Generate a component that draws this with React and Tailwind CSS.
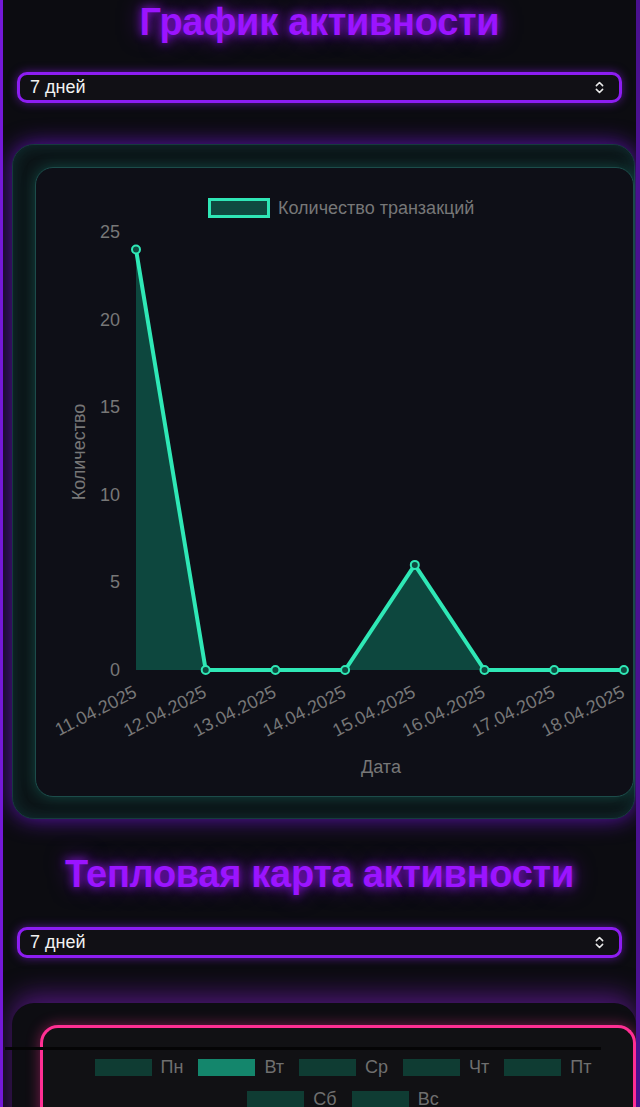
import { ChevronsUpDown } from 'lucide-react';

const FONT = { fontFamily: '"Liberation Sans", Arial, sans-serif' };

const days = ['11.04.2025', '12.04.2025', '13.04.2025', '14.04.2025', '15.04.2025', '16.04.2025', '17.04.2025', '18.04.2025'];
const values = [24, 0, 0, 0, 6, 0, 0, 0];

function Select() {
  return (
    <div className="ml-[14px] mr-[14px] h-[31px] flex items-center justify-between rounded-[10px] border-[3px] border-[#8d1df2] bg-[#111015] pl-[10px] pr-[12px] shadow-[0_0_10px_rgba(141,29,242,0.55)]">
      <span className="text-[18px] text-[#f2f2f2]">7 дней</span>
      <ChevronsUpDown size={15} strokeWidth={2.5} className="text-[#eaeaea]" />
    </div>
  );
}

function Title({ children }) {
  return (
    <h1 className="text-center text-[38px] leading-[44px] font-bold tracking-[-0.3px] text-[#9b14ff] [text-shadow:0_0_10px_rgba(155,20,255,0.9),0_0_22px_rgba(155,20,255,0.55)]">
      {children}
    </h1>
  );
}

function LineChart() {
  const x0 = 100;
  const step = 69.7;
  const zero = 502;
  const unit = 17.52;
  const pts = values.map((v, i) => [x0 + i * step, zero - v * unit]);
  const line = pts.map((p, i) => `${i ? 'L' : 'M'}${p[0]},${p[1]}`).join(' ');
  const area = `${line} L${pts[pts.length - 1][0]},${zero} L${pts[0][0]},${zero} Z`;
  const ticks = [0, 5, 10, 15, 20, 25];

  return (
    <svg width="605" height="630" className="block overflow-visible" style={FONT}>
      {/* legend */}
      <rect x="173.5" y="31.5" width="59" height="17" fill="#0f4a40" stroke="#2fe6b6" strokeWidth="3" />
      <text x="242" y="46" fontSize="18" fill="#777777">Количество транзакций</text>

      {/* y axis */}
      {ticks.map((t) => (
        <text key={t} x="84" y={zero - t * unit + 6} fontSize="18" fill="#777777" textAnchor="end">{t}</text>
      ))}
      <text x="49" y="284" fontSize="18" fill="#777777" textAnchor="middle" transform="rotate(-90 49 284)">Количество</text>

      {/* area + line */}
      <path d={area} fill="#0e4b40" fillOpacity="0.95" />
      <path d={line} fill="none" stroke="#2fe8b6" strokeWidth="4" strokeLinejoin="round" />
      {pts.map((p, i) => (
        <circle key={i} cx={p[0]} cy={p[1]} r="4" fill="#0e4b40" stroke="#2fe8b6" strokeWidth="2" />
      ))}

      {/* x labels */}
      {days.map((d, i) => {
        const x = x0 + i * step + 2;
        const y = 528;
        return (
          <text key={d} x={x} y={y} fontSize="18" fill="#777777" textAnchor="end" transform={`rotate(-27 ${x} ${y})`}>{d}</text>
        );
      })}
      <text x="345" y="605" fontSize="18" fill="#777777" textAnchor="middle">Дата</text>
    </svg>
  );
}

function LegendItem({ label, bright }) {
  return (
    <div className="flex items-center gap-[9px]">
      <div className={`w-[57px] h-[17px] ${bright ? 'bg-[#14866c]' : 'bg-[#0f3c33]'}`} />
      <span className="text-[18px] leading-none text-[#6f6f6f]">{label}</span>
    </div>
  );
}

export default function App() {
  return (
    <div
      className="relative w-[640px] h-[1107px] overflow-hidden bg-[#0c0c11] border-l-[3px] border-r-[4px] border-l-[#7419d8] border-r-[#4a1190]"
      style={FONT}
    >
      <Title>График активности</Title>
      <div className="mt-[28px]">
        <Select />
      </div>

      {/* chart card */}
      <div className="mt-[41px] ml-[9px] mr-[1px] rounded-[22px] bg-[#0c1518] border border-[#163b3e] shadow-[0_0_22px_rgba(120,20,230,0.75),inset_0_0_14px_rgba(30,130,130,0.25)] pt-[22px] pl-[22px] pb-[21px]">
        <div className="rounded-[18px] bg-[#0e0f17] border border-[#1c4c4a] shadow-[0_0_14px_rgba(30,160,140,0.35)] h-[630px]">
          <LineChart />
        </div>
      </div>

      <div className="mt-[33px]">
        <Title>Тепловая карта активности</Title>
      </div>
      <div className="mt-[31px]">
        <Select />
      </div>

      {/* heatmap card */}
      <div className="mt-[45px] ml-[9px] rounded-t-[22px] bg-[#0d0d12] shadow-[0_-8px_26px_rgba(130,30,200,0.55)] pt-[22px] pl-[28px] h-[200px]">
        <div className="rounded-t-[18px] border-[3px] border-b-0 border-[#ff2f93] bg-[#111114] shadow-[0_0_14px_rgba(255,47,147,0.45)] h-[180px] pt-[30px]">
          <div className="flex flex-col items-center gap-[14px] pl-[10px]">
            <div className="flex items-center gap-[15px]">
              <LegendItem label="Пн" />
              <LegendItem label="Вт" bright />
              <LegendItem label="Ср" />
              <LegendItem label="Чт" />
              <LegendItem label="Пт" />
            </div>
            <div className="flex items-center gap-[15px]">
              <LegendItem label="Сб" />
              <LegendItem label="Вс" />
            </div>
          </div>
        </div>
      </div>

      {/* stray dark rule over the heatmap card */}
      <div className="absolute left-[2px] top-[1047px] w-[596px] h-[3px] bg-[#050506]" />
    </div>
  );
}
